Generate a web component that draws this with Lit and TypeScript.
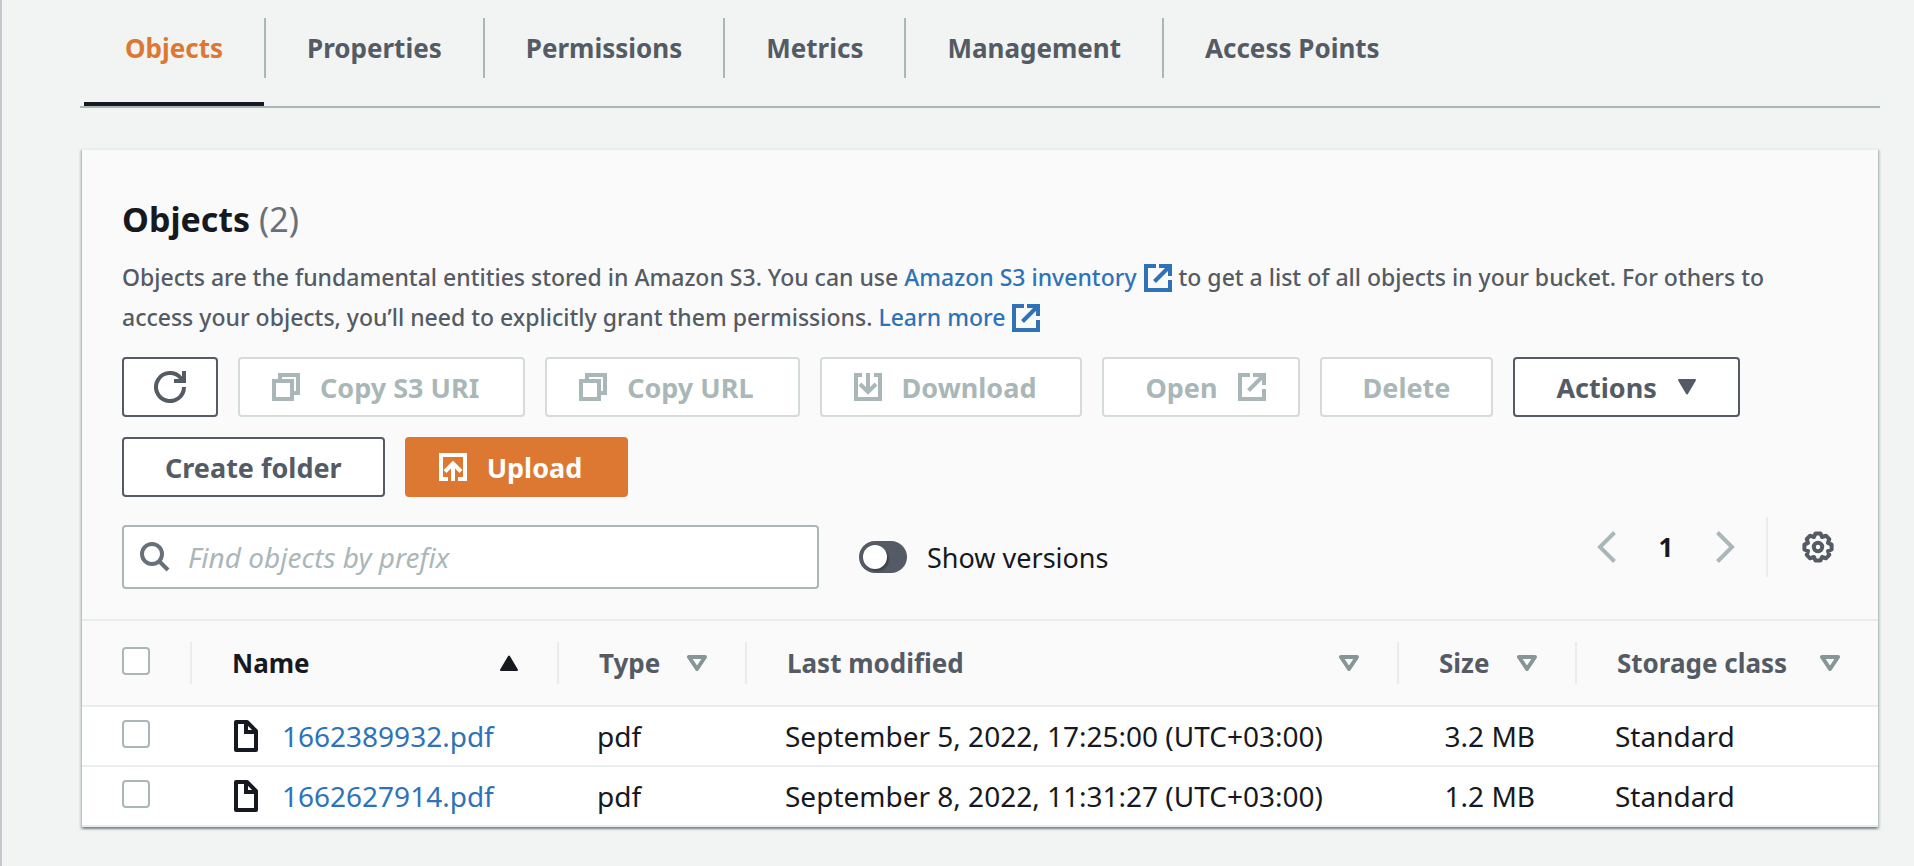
import { LitElement, html, css, svg, nothing } from "lit";
import { customElement, property, state } from "lit/decorators.js";
import { classMap } from "lit/directives/class-map.js";

const gearOutline = Array.from({ length: 8 }, (_, i) => {
  const point = (deg: number, r: number) => {
    const a = (deg * Math.PI) / 180;
    return `${(16 + r * Math.cos(a)).toFixed(2)},${(16 + r * Math.sin(a)).toFixed(2)}`;
  };
  const mid = i * 45;
  return [point(mid - 10, 13.8), point(mid + 10, 13.8), point(mid + 22.5, 10.8)].join(" ");
}).join(" ");

const icons = {
  refresh: {
    w: 32, h: 32,
    body: svg`<path d="M30 16A14 14 0 1 1 26.5 6.8L29.5 9.8" /><path d="M20 10H30V0" />`,
  },
  copy: {
    w: 28, h: 28,
    body: svg`<path d="M8 8V2H26V20H20" /><path d="M2 8H20V26H2Z" />`,
  },
  external: {
    w: 28, h: 28,
    body: svg`<path d="M12 2H2V26H26V16" /><path d="M15 2H26V12" /><path d="M10.500 17.500L25 3" />`,
  },
  download: {
    w: 28, h: 28,
    body: svg`<path d="M8 2H2V26H26V2H20" /><path d="M14 0V17" /><path d="M6 11L14 19L22 11" />`,
  },
  upload: {
    w: 28, h: 28,
    body: svg`<path d="M9 26H2V2H26V26H19" /><path d="M14 28V11" /><path d="M6 18.500L14 10.500L22 18.500" />`,
  },
  caret: {
    w: 20, h: 16,
    body: svg`<path class="solid" d="M2 1H18L10 14.500Z" />`,
  },
  ascending: {
    w: 20, h: 16,
    body: svg`<path class="solid" d="M2 15H18L10 1.500Z" />`,
  },
  sortable: {
    w: 20, h: 16,
    body: svg`<path class="thin" d="M2 2H18L10 14Z" />`,
  },
  search: {
    w: 30, h: 30,
    body: svg`<circle cx="12" cy="12" r="10" /><path d="M19 19L28 28" />`,
  },
  previous: {
    w: 20, h: 32,
    body: svg`<path d="M17.500 1.500L3 16L17.500 30.500" />`,
  },
  next: {
    w: 20, h: 32,
    body: svg`<path d="M2.500 1.500L17 16L2.500 30.500" />`,
  },
  settings: {
    w: 32, h: 32,
    body: svg`<polygon class="round" points=${gearOutline} /><circle cx="16" cy="16" r="4.200" />`,
  },
  file: {
    w: 24, h: 32,
    body: svg`<path class="round" d="M2 2H13L18 7L22 11V30H2Z" /><path d="M12 2V12H21" />`,
  },
};

@customElement("s3-icon")
class S3Icon extends LitElement {
  static styles = css`
    :host { display: inline-flex; flex: none; }
    svg { display: block; fill: none; stroke: currentColor; stroke-width: 4; }
    .solid { fill: currentColor; stroke-width: 2; stroke-linejoin: round; }
    .thin { stroke-width: 4; stroke-linejoin: round; }
    .round { stroke-linejoin: round; }
  `;
  @property() name: keyof typeof icons = "copy";
  render() {
    const { w, h, body } = icons[this.name];
    return html`<svg width=${w} height=${h} viewBox="0 0 ${w} ${h}" aria-hidden="true">${body}</svg>`;
  }
}

const tabs = ["Objects", "Properties", "Permissions", "Metrics", "Management", "Access Points"];

const columns = [
  { id: "name", label: "Name" },
  { id: "type", label: "Type" },
  { id: "modified", label: "Last modified" },
  { id: "size", label: "Size" },
  { id: "storage", label: "Storage class" },
];

const objects = [
  { name: "1662389932.pdf", type: "pdf", modified: "September 5, 2022, 17:25:00 (UTC+03:00)", size: "3.2 MB", storage: "Standard" },
  { name: "1662627914.pdf", type: "pdf", modified: "September 8, 2022, 11:31:27 (UTC+03:00)", size: "1.2 MB", storage: "Standard" },
];

@customElement("app-root")
class AppRoot extends LitElement {
  static styles = css`
    :host {
      --text: #16191f;
      --muted: #545b64;
      --line: #aab7b8;
      --faint: #eaeded;
      --link: #2e73b8;
      --orange: #dd7832;
      display: block;
      box-sizing: border-box;
      min-height: 100vh;
      padding: 0 34px 36px 78px;
      border-left: 2px solid #c3c9cc;
      background: #f1f4f3;
      color: var(--text);
      font-family: "Noto Sans", "Open Sans", sans-serif;
      font-size: 28px;
    }
    *, *::before { box-sizing: border-box; }
    a { color: var(--link); text-decoration: none; }
    button, input { font: inherit; margin: 0; }

    .tabs {
      display: flex;
      margin: 0;
      padding: 18px 4px 0;
      border-bottom: 2px solid var(--line);
      list-style: none;
      font-size: 26px;
      font-weight: 700;
    }
    .tab { display: flex; }
    .tab + .tab::before { content: ""; width: 2px; height: 60px; background: var(--line); }
    .tab-link {
      padding: 0 41px 24px;
      border-bottom: 4px solid transparent;
      color: var(--muted);
      line-height: 60px;
    }
    .tab-link.active { color: var(--orange); border-color: var(--text); }

    .card {
      margin: 40px 2px 0;
      border-top: 2px solid var(--faint);
      background: #fafafa;
      box-shadow: 0 2px 2px rgba(0, 28, 36, 0.3), 2px 2px 2px rgba(0, 28, 36, 0.15), -2px 2px 2px rgba(0, 28, 36, 0.15);
    }
    .head { padding: 47px 40px 30px; }
    .title { margin: 0 0 16px; font-size: 34px; line-height: 44px; }
    .count { color: #687078; font-weight: 400; }
    .intro { margin: 0 0 20px; padding-right: 40px; color: var(--muted); font-size: 23px; font-weight: 500; line-height: 40px; }
    .intro s3-icon { margin: 0 1px; vertical-align: -6px; }

    .actions { display: flex; flex-wrap: wrap; gap: 20px; }
    .btn {
      display: flex;
      align-items: center;
      gap: 20px;
      height: 60px;
      padding: 0 41px;
      border: 2px solid var(--muted);
      border-radius: 4px;
      background: #fff;
      color: var(--muted);
      font-size: 27px;
      font-weight: 700;
      white-space: nowrap;
    }
    .btn:disabled { border-color: #d5dbdb; color: var(--line); }
    .btn.square { padding: 0 30px; }
    .btn.lead { padding: 0 44px 0 32px; }
    .btn.trail { padding-right: 32px; }
    .btn.primary { border-color: var(--orange); background: var(--orange); color: #fff; }

    .filters { display: flex; align-items: flex-start; margin-top: 20px; }
    .search {
      display: flex;
      align-items: center;
      flex: 0 1 697px;
      gap: 18px;
      height: 64px;
      margin-top: 8px;
      padding: 0 16px;
      border: 2px solid var(--line);
      border-radius: 4px;
      background: #fff;
      color: #687078;
    }
    .search-input { flex: 1; min-width: 0; padding: 0; border: 0; outline: 0; background: none; color: var(--text); }
    .search-input::placeholder { color: var(--line); font-style: italic; opacity: 1; }
    .toggle { display: flex; align-items: center; gap: 20px; height: 64px; margin: 8px 0 0 40px; font-size: 27px; }
    .switch {
      appearance: none;
      display: flex;
      align-items: center;
      width: 48px;
      height: 32px;
      padding: 0 4px;
      border-radius: 16px;
      background: var(--muted);
    }
    .switch::before {
      content: "";
      width: 24px;
      height: 24px;
      border-radius: 50%;
      background: #fff;
      box-shadow: 2px 2px 2px rgba(0, 0, 0, 0.3);
    }
    .switch:checked { justify-content: flex-end; background: var(--link); }
    .pager { display: flex; align-items: center; height: 60px; margin-left: auto; }
    .icon-btn { display: flex; padding: 0; border: 0; background: none; color: var(--muted); }
    .icon-btn:disabled { color: var(--line); }
    .page { width: 98px; text-align: center; font-size: 26px; font-weight: 700; }
    .settings { display: flex; align-items: center; height: 60px; margin-left: 31px; padding: 0 4px 0 34px; border-left: 2px solid var(--faint); }

    .table { width: 100%; border-spacing: 0; table-layout: fixed; }
    .col-select { width: 110px; }
    .col-name { width: 367px; }
    .col-type { width: 188px; }
    .col-size { width: 178px; }
    .col-storage { width: 301px; }
    .table th { height: 88px; padding: 0; border: solid var(--faint); border-width: 2px 0; color: var(--muted); font-size: 26px; }
    .th-cell { display: flex; align-items: center; height: 42px; padding: 0 38px 0 40px; border-right: 2px solid var(--faint); white-space: nowrap; }
    .th-cell.last { border-right: 0; }
    .sort { display: flex; flex: 1; align-items: center; justify-content: space-between; padding: 0; border: 0; background: none; color: inherit; font-weight: 700; }
    .sort s3-icon { color: #879596; }
    .sort.sorted, .sort.sorted s3-icon { color: var(--text); }
    .table td { height: 60px; padding: 0 38px; border-bottom: 2px solid var(--faint); background: #fff; line-height: 40px; white-space: nowrap; }
    .table td.pick { padding-left: 40px; }
    .table td.size { padding-right: 42px; text-align: right; }
    .check {
      appearance: none;
      display: block;
      width: 28px;
      height: 28px;
      margin-bottom: 4px;
      border: 2px solid var(--line);
      border-radius: 4px;
      background: #fff;
    }
    .check:checked { background: var(--link); border-color: var(--link); }
    .file { display: flex; align-items: center; gap: 24px; padding-left: 4px; }
  `;

  @state() private active = "Objects";

  private header(col: (typeof columns)[number], last: boolean) {
    const sorted = col.id === "name";
    return html`<th scope="col" aria-sort=${sorted ? "ascending" : nothing}>
      <div class=${classMap({ "th-cell": true, last })}>
        <button class=${classMap({ sort: true, sorted })}>
          ${col.label}<s3-icon name=${sorted ? "ascending" : "sortable"}></s3-icon>
        </button>
      </div>
    </th>`;
  }

  render() {
    return html`
      <nav aria-label="Bucket">
        <ul class="tabs">
          ${tabs.map((t) => html`<li class="tab">
            <a href="#" class=${classMap({ "tab-link": true, active: t === this.active })}
              @click=${(e: Event) => { e.preventDefault(); this.active = t; }}>${t}</a>
          </li>`)}
        </ul>
      </nav>
      <section class="card">
        <div class="head">
          <h2 class="title">Objects <span class="count">(2)</span></h2>
          <p class="intro">
            Objects are the fundamental entities stored in Amazon S3. You can use
            <a href="#">Amazon S3 inventory <s3-icon name="external"></s3-icon></a>
            to get a list of all objects in your bucket. For others to access your objects, you’ll need to
            explicitly grant them permissions. <a href="#">Learn more <s3-icon name="external"></s3-icon></a>
          </p>
          <div class="actions">
            <button class="btn square" aria-label="Refresh"><s3-icon name="refresh"></s3-icon></button>
            <button class="btn lead" disabled><s3-icon name="copy"></s3-icon>Copy S3 URI</button>
            <button class="btn lead" disabled><s3-icon name="copy"></s3-icon>Copy URL</button>
            <button class="btn lead" disabled><s3-icon name="download"></s3-icon>Download</button>
            <button class="btn trail" disabled>Open<s3-icon name="external"></s3-icon></button>
            <button class="btn" disabled>Delete</button>
            <button class="btn">Actions<s3-icon name="caret"></s3-icon></button>
            <button class="btn">Create folder</button>
            <button class="btn lead primary"><s3-icon name="upload"></s3-icon>Upload</button>
          </div>
          <div class="filters">
            <label class="search">
              <s3-icon name="search"></s3-icon>
              <input class="search-input" type="text" aria-label="Find objects by prefix" placeholder="Find objects by prefix" />
            </label>
            <label class="toggle"><input class="switch" type="checkbox" role="switch" />Show versions</label>
            <div class="pager">
              <button class="icon-btn" disabled aria-label="Previous page"><s3-icon name="previous"></s3-icon></button>
              <span class="page">1</span>
              <button class="icon-btn" disabled aria-label="Next page"><s3-icon name="next"></s3-icon></button>
              <div class="settings">
                <button class="icon-btn" aria-label="Preferences"><s3-icon name="settings"></s3-icon></button>
              </div>
            </div>
          </div>
        </div>
        <table class="table">
          <colgroup>
            <col class="col-select" />
            ${columns.map((c) => html`<col class="col-${c.id}" />`)}
          </colgroup>
          <thead>
            <tr>
              <th scope="col"><div class="th-cell"><input class="check" type="checkbox" aria-label="Select all objects" /></div></th>
              ${columns.map((c, i) => this.header(c, i === columns.length - 1))}
            </tr>
          </thead>
          <tbody>
            ${objects.map((o) => html`<tr>
              <td class="pick"><input class="check" type="checkbox" aria-label="Select ${o.name}" /></td>
              <td><div class="file"><s3-icon name="file"></s3-icon><a href="#">${o.name}</a></div></td>
              <td>${o.type}</td>
              <td>${o.modified}</td>
              <td class="size">${o.size}</td>
              <td>${o.storage}</td>
            </tr>`)}
          </tbody>
        </table>
      </section>
    `;
  }
}
